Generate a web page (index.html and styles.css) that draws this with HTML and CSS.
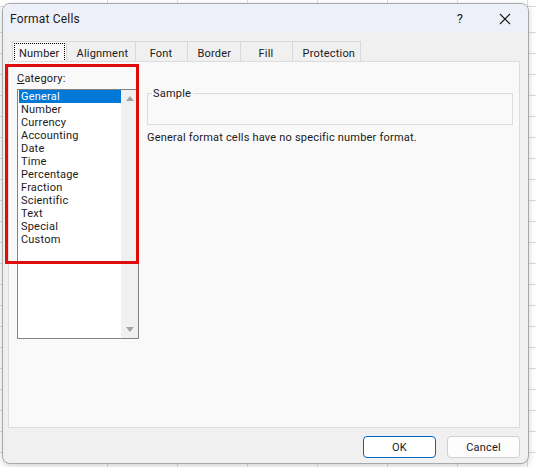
FILE: index.html
```html
<!DOCTYPE html>
<html lang="en">

<head>
    <meta charset="UTF-8" />
    <meta name="viewport" content="width=device-width, initial-scale=1.0" />
    <title>Format Cells</title>
    <link rel="stylesheet" href="styles.css">
</head>

<body>
    <div class="dialog">
        <div class="titlebar">
            <span class="title">Format Cells</span>
            <span class="help">?</span>
            <span class="close">
                <svg width="12" height="12" viewBox="0 0 12 12">
                    <path d="M1 1 L11 11 M11 1 L1 11" stroke="#1a1a1a" stroke-width="1.1" fill="none" />
                </svg>
            </span>
        </div>

        <div class="body">
            <div class="tabs">
                <div class="tab active"><span class="focus">Number</span></div>
                <div class="tab">Alignment</div>
                <div class="tab">Font</div>
                <div class="tab">Border</div>
                <div class="tab">Fill</div>
                <div class="tab">Protection</div>
            </div>

            <div class="panel">
                <div class="left">
                    <div class="catLabel"><u>C</u>ategory:</div>
                    <div class="listbox">
                        <ul class="items">
                            <li class="selected">General</li>
                            <li>Number</li>
                            <li>Currency</li>
                            <li>Accounting</li>
                            <li>Date</li>
                            <li>Time</li>
                            <li>Percentage</li>
                            <li>Fraction</li>
                            <li>Scientific</li>
                            <li>Text</li>
                            <li>Special</li>
                            <li>Custom</li>
                        </ul>
                        <div class="scrollbar">
                            <span class="arrow up"></span>
                            <span class="arrow down"></span>
                        </div>
                    </div>
                </div>

                <div class="right">
                    <fieldset class="sample">
                        <legend>Sample</legend>
                    </fieldset>
                    <p class="desc">General format cells have no specific number format.</p>
                </div>

                <div class="highlight"></div>
            </div>

            <div class="footer">
                <button class="btn default">OK</button>
                <button class="btn">Cancel</button>
            </div>
        </div>
    </div>
</body>

</html>
```

FILE: styles.css
```css
html,
body {
    margin: 0;
    height: 100%;
}

body {
    font-family: Roboto, "Noto Sans", sans-serif;
    font-size: 11px;
    letter-spacing: 0.2px;
    color: #1a1a1a;
    background-color: #ffffff;
    background-image:
        repeating-linear-gradient(to right, transparent 0, transparent 69px, #dadada 69px, #dadada 70px),
        repeating-linear-gradient(to bottom, transparent 0, transparent 20px, #dadada 20px, #dadada 21px);
    background-position: 38px 12px;
    overflow: hidden;
}

.dialog {
    width: 525px;
    height: 459px;
    margin: 3px 0 0 2px;
    border: 1px solid #a8a8a8;
    border-radius: 8px;
    background: #f0f0f0;
    box-shadow: 0 2px 6px rgba(0, 0, 0, 0.18);
    display: flex;
    flex-direction: column;
    overflow: hidden;
}

.titlebar {
    height: 29px;
    flex: none;
    background: #eef0f9;
    display: flex;
    align-items: center;
    padding-left: 7px;
    font-size: 12px;
}

.title {
    flex: 1;
}

.help {
    width: 20px;
    text-align: center;
    font-size: 13px;
    margin-right: 25px;
}

.close {
    width: 20px;
    display: flex;
    justify-content: center;
    margin-right: 13px;
}

.body {
    flex: 1;
    display: flex;
    flex-direction: column;
    padding: 8px 8px 0 5px;
}

.tabs {
    display: flex;
    height: 20px;
    padding-left: 4px;
}

.tab {
    border: 1px solid #d9d9d9;
    border-bottom: none;
    border-left: none;
    padding: 4px 10px 0;
    line-height: 15px;
    background: #f0f0f0;
    text-align: center;
}

.tab:nth-child(2) {
    width: 48px;
}

.tab:nth-child(3) {
    width: 31px;
}

.tab:nth-child(4) {
    width: 32px;
}

.tab:nth-child(5) {
    width: 31px;
}

.tab:nth-child(6) {
    width: 47px;
}

.tab.active {
    border-left: 1px solid #d9d9d9;
    padding: 1px 1px 0;
    background: #f9f9f9;
}

.focus {
    display: block;
    border: 1px dotted #000;
    line-height: 15px;
    padding: 2px 4px 0;
}

.panel {
    position: relative;
    height: 365px;
    border: 1px solid #dcdcdc;
    background: #f9f9f9;
    display: flex;
}

.left {
    width: 122px;
    padding: 10px 0 0 8px;
}

.catLabel {
    height: 13px;
    line-height: 13px;
    margin-bottom: 4px;
}

.listbox {
    height: 248px;
    border: 1px solid #828282;
    background: #fff;
    display: flex;
}

.items {
    list-style: none;
    margin: 0;
    padding: 0 0 0 1px;
    flex: 1;
}

.items li {
    height: 13px;
    line-height: 13px;
    padding-left: 2px;
}

.items li.selected {
    background: #0078d7;
    color: #fff;
}

.scrollbar {
    width: 17px;
    background: #f0f0f0;
    display: flex;
    flex-direction: column;
    justify-content: space-between;
    align-items: center;
    padding: 6px 0;
}

.arrow {
    width: 0;
    height: 0;
    border-left: 4px solid transparent;
    border-right: 4px solid transparent;
}

.arrow.up {
    border-bottom: 5px solid #a3a3a3;
}

.arrow.down {
    border-top: 5px solid #a3a3a3;
}

.right {
    flex: 1;
    padding: 25px 6px 0 8px;
}

.sample {
    margin: 0;
    height: 36px;
    border: 1px solid #dcdcdc;
    padding: 0;
}

.sample legend {
    margin-left: 4px;
    padding: 0 2px 0 1px;
    line-height: 13px;
}

.desc {
    margin: 6px 0 0;
    line-height: 13px;
}

.highlight {
    position: absolute;
    left: -4px;
    top: 2px;
    width: 128px;
    height: 194px;
    border: 3px solid #e00b0b;
}

.footer {
    display: flex;
    justify-content: flex-end;
    gap: 11px;
    padding: 8px 0 0;
}

.btn {
    width: 73px;
    height: 22px;
    border: 1px solid #d0d0d0;
    border-radius: 4px;
    background: #fdfdfd;
    font-family: inherit;
    font-size: 11px;
    letter-spacing: inherit;
    color: #1a1a1a;
    padding: 0;
}

.btn.default {
    border-color: #0067c0;
    background: #fff;
}
```
